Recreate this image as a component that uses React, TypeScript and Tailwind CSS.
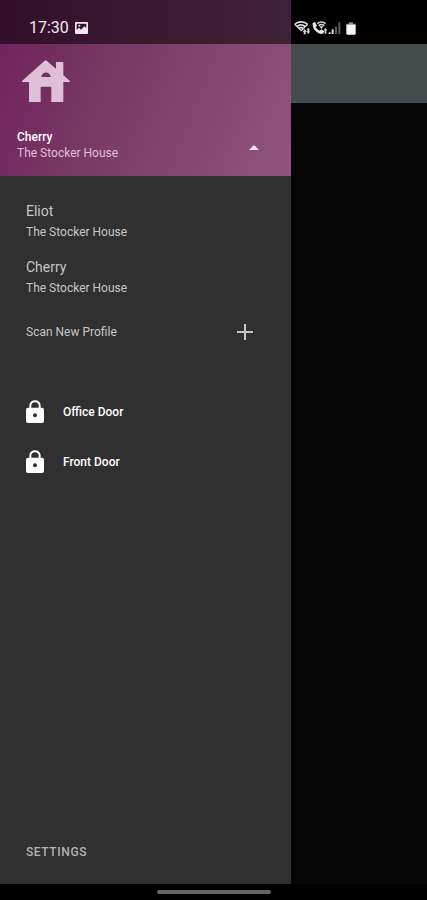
import React, { useState } from 'react';

interface Profile {
  name: string;
  house: string;
}

const profiles: Profile[] = [
  { name: 'Eliot', house: 'The Stocker House' },
  { name: 'Cherry', house: 'The Stocker House' },
];

const doors = ['Office Door', 'Front Door'];

const HouseLogo = () => (
  <svg viewBox="0 0 144 126" className="w-12 h-[42px] text-[#dfbfd8]" fill="currentColor" aria-hidden="true">
    <path
      fillRule="evenodd"
      d="M68 2 Q71 0 74 2 L102 26 V6 H124 V46 L144 63 V66 H124 V126 H88 V80 H56 V126 H21 V66 H0 V63 Z M58 51 H86 C84 33 60 33 58 51 Z"
    />
  </svg>
);

const PictureIcon = () => (
  <svg viewBox="0 0 39 36" className="w-[13px] h-3" aria-hidden="true">
    <path
      fill="#f1e9ef"
      fillRule="evenodd"
      d="M3 0 H36 Q39 0 39 3 V33 Q39 36 36 36 H3 Q0 36 0 33 V3 Q0 0 3 0 Z M5 5 V24 L12 17 L18 23 L28 13 L34 18 V5 Z"
    />
    <circle cx="13" cy="11" r="3" fill="#f1e9ef" />
  </svg>
);

const WifiIcon = () => (
  <svg viewBox="0 0 48 42" className="w-4 h-3.5" fill="none" stroke="#d8d8d8" aria-hidden="true">
    <path strokeWidth="5" d="M2 10 Q21 -5 41 10 M8 17 Q21 6 34 17 M14 23 Q21 17 28 23" />
    <path strokeWidth="4" d="M2 10 L22 29 L41 10" />
    <path fill="#d8d8d8" stroke="none" d="M32 24 L38 32 H35 V40 H29 V32 H26 Z M43 40 L37 31 H40 V22 H46 V31 H48 Z" />
  </svg>
);

const WifiCallIcon = () => (
  <svg viewBox="0 0 48 42" className="w-4 h-3.5" fill="none" stroke="#d8d8d8" aria-hidden="true">
    <path
      fill="#e8e8e8"
      stroke="none"
      d="M2 6 L9 3 L15 14 L11 18 Q15 26 23 29 L28 25 L37 31 L34 37 Q26 42 14 33 Q0 21 2 6 Z"
    />
    <path strokeWidth="5" d="M16 8 Q28 -2 41 8 M20 14 Q28 7 37 14" />
    <path fill="#d8d8d8" stroke="none" d="M22 16 H35 L28 24 Z M40 21 L46 28 H43 V38 H38 V28 H35 Z" />
  </svg>
);

const SignalIcon = () => (
  <svg viewBox="0 0 42 42" className="w-3.5 h-3.5" aria-hidden="true">
    <path fill="#dcdcdc" d="M2 34 H8 V39 H2 Z M11 25 H17 V39 H11 Z" />
    <path fill="#5c5c5c" d="M21 17 H27 V39 H21 Z M31 4 H37 V39 H31 Z" />
  </svg>
);

const BatteryIcon = () => (
  <svg viewBox="0 0 30 39" className="w-2.5 h-[13px]" aria-hidden="true">
    <path fill="#8c8c8c" d="M9 1 H21 V5 H29 V11 H1 V5 H9 Z" />
    <rect x="1" y="8" width="28" height="30" rx="3" fill="#f5f5f5" />
  </svg>
);

const LockIcon = () => (
  <svg viewBox="0 0 54 69" className="w-[18px] h-[23px]" aria-hidden="true">
    <path fill="none" stroke="#fff" strokeWidth="6" d="M13 26 V17 C13 -1 41 -1 41 17 V26" />
    <rect y="23" width="54" height="46" rx="6" fill="#fff" />
    <circle cx="27" cy="46" r="6" fill="#303030" />
  </svg>
);

const DrawerHeader: React.FC<{ profile: Profile; open: boolean; onToggle: () => void }> = ({
  profile,
  open,
  onToggle,
}) => (
  <header className="flex flex-col gap-[27px] bg-[linear-gradient(112deg,#6f235c,#7b3e68_45%,#90547f)] pt-4 pb-[15px] pr-8">
    <div className="pl-[22px]">
      <HouseLogo />
    </div>
    <button type="button" onClick={onToggle} aria-expanded={open} className="flex items-center justify-between pl-[17px] text-left">
      <span className="flex flex-col text-xs leading-4">
        <span className="font-medium text-white">{profile.name}</span>
        <span className="text-[#dfbfd8]">{profile.house}</span>
      </span>
      <svg viewBox="0 0 10 5" className={`mt-1 w-2.5 h-[5px] ${open ? '' : 'rotate-180'}`} aria-hidden="true">
        <path fill="#f6e6f3" d="M5 0 L10 5 H0 Z" />
      </svg>
    </button>
  </header>
);

const App: React.FC = () => {
  const [open, setOpen] = useState(true);
  const [active, setActive] = useState<Profile>(profiles[1]);

  return (
    <div className="flex min-h-screen flex-col bg-black font-['Roboto',sans-serif]">
      <div className="flex flex-1">
        <aside className="flex w-[291px] shrink-0 flex-col bg-[#303030]">
          <div className="flex h-11 items-center gap-1.5 bg-linear-to-r from-[#330f29] to-[#402238] pt-3 pl-[29px]">
            <span className="text-base text-[#f1e9ef]">17:30</span>
            <PictureIcon />
          </div>

          <DrawerHeader profile={active} open={open} onToggle={() => setOpen(!open)} />

          {open && (
            <div className="flex flex-col pt-[17px] pl-[26px] pr-[38px] text-[#c6c6c6]">
              {profiles.map((profile) => (
                <button
                  key={profile.name}
                  type="button"
                  onClick={() => setActive(profile)}
                  className="flex h-14 flex-col justify-center text-left"
                >
                  <span className="text-sm leading-[22px]">{profile.name}</span>
                  <span className="text-xs leading-5">{profile.house}</span>
                </button>
              ))}
              <button type="button" className="flex h-[54px] items-center justify-between text-xs">
                Scan New Profile
                <svg viewBox="0 0 16 16" className="w-4 h-4" aria-hidden="true">
                  <path stroke="#c6c6c6" strokeWidth="2" d="M8 0 V16 M0 8 H16" />
                </svg>
              </button>
            </div>
          )}

          <nav className="mt-7 flex flex-col pl-[26px]">
            {doors.map((door) => (
              <button key={door} type="button" className="flex h-[50px] items-center gap-[19px] text-xs font-medium text-white">
                <span className="pb-0.5">
                  <LockIcon />
                </span>
                {door}
              </button>
            ))}
          </nav>

          <button type="button" className="mt-auto h-16 pl-[26px] text-left text-xs font-medium tracking-wider text-[#b4b4b4]">
            SETTINGS
          </button>
        </aside>

        <main className="flex flex-1 flex-col bg-[#060606]">
          <div className="flex h-11 items-center bg-black pt-3 pl-[3px]">
            <WifiIcon />
            <span className="ml-0.5 flex">
              <WifiCallIcon />
              <SignalIcon />
            </span>
            <span className="ml-1">
              <BatteryIcon />
            </span>
          </div>
          <div className="h-[59px] bg-[#464c4d]" />
        </main>
      </div>

      {/* gesture bar */}
      <div className="flex h-4 items-center justify-center bg-black">
        <div className="h-1 w-[114px] rounded-full bg-[#666]" />
      </div>
    </div>
  );
};

export default App;
